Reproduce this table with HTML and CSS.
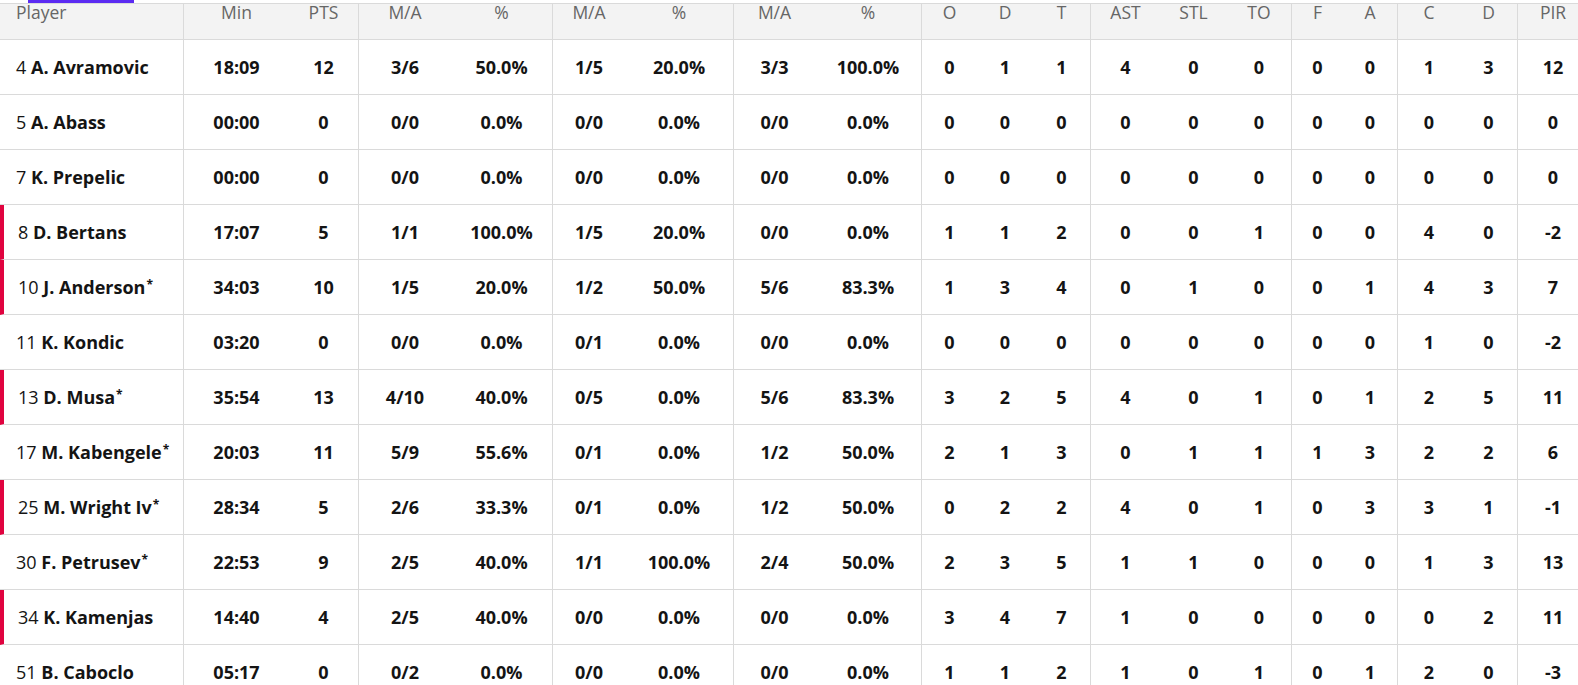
FILE: index.html
```html
<!DOCTYPE html>
<html lang="en">
<head>
<meta charset="utf-8">
<title>Box score</title>
<link rel="stylesheet" href="styles.css">
</head>
<body>
<div class="tabs"><span class="tab-indicator"></span></div>
<table class="box">
<colgroup>
<col class="c-player"><col class="c-min"><col class="c-pts">
<col class="c-ma1"><col class="c-pc1"><col class="c-ma2"><col class="c-pc2"><col class="c-ma3"><col class="c-pc3">
<col class="c-o"><col class="c-d"><col class="c-t">
<col class="c-ast"><col class="c-stl"><col class="c-to">
<col class="c-f"><col class="c-a">
<col class="c-c"><col class="c-d2">
<col class="c-pir">
</colgroup>
<thead>
<tr>
<th class="player">Player</th><th>Min</th><th class="g">PTS</th>
<th>M/A</th><th class="g">%</th><th>M/A</th><th class="g">%</th><th>M/A</th><th class="g">%</th>
<th>O</th><th>D</th><th class="g">T</th>
<th>AST</th><th>STL</th><th class="g">TO</th>
<th>F</th><th class="g">A</th>
<th>C</th><th class="g">D</th>
<th>PIR</th>
</tr>
</thead>
<tbody>
<tr><td class="player"><span class="num">4</span> <b>A. Avramovic</b></td><td>18:09</td><td class="g">12</td><td>3/6</td><td class="g">50.0%</td><td>1/5</td><td class="g">20.0%</td><td>3/3</td><td class="g">100.0%</td><td>0</td><td>1</td><td class="g">1</td><td>4</td><td>0</td><td class="g">0</td><td>0</td><td class="g">0</td><td>1</td><td class="g">3</td><td>12</td></tr>
<tr><td class="player"><span class="num">5</span> <b>A. Abass</b></td><td>00:00</td><td class="g">0</td><td>0/0</td><td class="g">0.0%</td><td>0/0</td><td class="g">0.0%</td><td>0/0</td><td class="g">0.0%</td><td>0</td><td>0</td><td class="g">0</td><td>0</td><td>0</td><td class="g">0</td><td>0</td><td class="g">0</td><td>0</td><td class="g">0</td><td>0</td></tr>
<tr><td class="player"><span class="num">7</span> <b>K. Prepelic</b></td><td>00:00</td><td class="g">0</td><td>0/0</td><td class="g">0.0%</td><td>0/0</td><td class="g">0.0%</td><td>0/0</td><td class="g">0.0%</td><td>0</td><td>0</td><td class="g">0</td><td>0</td><td>0</td><td class="g">0</td><td>0</td><td class="g">0</td><td>0</td><td class="g">0</td><td>0</td></tr>
<tr class="oncourt"><td class="player"><span class="num">8</span> <b>D. Bertans</b></td><td>17:07</td><td class="g">5</td><td>1/1</td><td class="g">100.0%</td><td>1/5</td><td class="g">20.0%</td><td>0/0</td><td class="g">0.0%</td><td>1</td><td>1</td><td class="g">2</td><td>0</td><td>0</td><td class="g">1</td><td>0</td><td class="g">0</td><td>4</td><td class="g">0</td><td>-2</td></tr>
<tr class="oncourt"><td class="player"><span class="num">10</span> <b>J. Anderson<sup>*</sup></b></td><td>34:03</td><td class="g">10</td><td>1/5</td><td class="g">20.0%</td><td>1/2</td><td class="g">50.0%</td><td>5/6</td><td class="g">83.3%</td><td>1</td><td>3</td><td class="g">4</td><td>0</td><td>1</td><td class="g">0</td><td>0</td><td class="g">1</td><td>4</td><td class="g">3</td><td>7</td></tr>
<tr><td class="player"><span class="num">11</span> <b>K. Kondic</b></td><td>03:20</td><td class="g">0</td><td>0/0</td><td class="g">0.0%</td><td>0/1</td><td class="g">0.0%</td><td>0/0</td><td class="g">0.0%</td><td>0</td><td>0</td><td class="g">0</td><td>0</td><td>0</td><td class="g">0</td><td>0</td><td class="g">0</td><td>1</td><td class="g">0</td><td>-2</td></tr>
<tr class="oncourt"><td class="player"><span class="num">13</span> <b>D. Musa<sup>*</sup></b></td><td>35:54</td><td class="g">13</td><td>4/10</td><td class="g">40.0%</td><td>0/5</td><td class="g">0.0%</td><td>5/6</td><td class="g">83.3%</td><td>3</td><td>2</td><td class="g">5</td><td>4</td><td>0</td><td class="g">1</td><td>0</td><td class="g">1</td><td>2</td><td class="g">5</td><td>11</td></tr>
<tr><td class="player"><span class="num">17</span> <b>M. Kabengele<sup>*</sup></b></td><td>20:03</td><td class="g">11</td><td>5/9</td><td class="g">55.6%</td><td>0/1</td><td class="g">0.0%</td><td>1/2</td><td class="g">50.0%</td><td>2</td><td>1</td><td class="g">3</td><td>0</td><td>1</td><td class="g">1</td><td>1</td><td class="g">3</td><td>2</td><td class="g">2</td><td>6</td></tr>
<tr class="oncourt"><td class="player"><span class="num">25</span> <b>M. Wright Iv<sup>*</sup></b></td><td>28:34</td><td class="g">5</td><td>2/6</td><td class="g">33.3%</td><td>0/1</td><td class="g">0.0%</td><td>1/2</td><td class="g">50.0%</td><td>0</td><td>2</td><td class="g">2</td><td>4</td><td>0</td><td class="g">1</td><td>0</td><td class="g">3</td><td>3</td><td class="g">1</td><td>-1</td></tr>
<tr><td class="player"><span class="num">30</span> <b>F. Petrusev<sup>*</sup></b></td><td>22:53</td><td class="g">9</td><td>2/5</td><td class="g">40.0%</td><td>1/1</td><td class="g">100.0%</td><td>2/4</td><td class="g">50.0%</td><td>2</td><td>3</td><td class="g">5</td><td>1</td><td>1</td><td class="g">0</td><td>0</td><td class="g">0</td><td>1</td><td class="g">3</td><td>13</td></tr>
<tr class="oncourt"><td class="player"><span class="num">34</span> <b>K. Kamenjas</b></td><td>14:40</td><td class="g">4</td><td>2/5</td><td class="g">40.0%</td><td>0/0</td><td class="g">0.0%</td><td>0/0</td><td class="g">0.0%</td><td>3</td><td>4</td><td class="g">7</td><td>1</td><td>0</td><td class="g">0</td><td>0</td><td class="g">0</td><td>0</td><td class="g">2</td><td>11</td></tr>
<tr><td class="player"><span class="num">51</span> <b>B. Caboclo</b></td><td>05:17</td><td class="g">0</td><td>0/2</td><td class="g">0.0%</td><td>0/0</td><td class="g">0.0%</td><td>0/0</td><td class="g">0.0%</td><td>1</td><td>1</td><td class="g">2</td><td>1</td><td>0</td><td class="g">1</td><td>0</td><td class="g">1</td><td>2</td><td class="g">0</td><td>-3</td></tr>
</tbody>
</table>
</body>
</html>
```
FILE: styles.css
```css
* { box-sizing: border-box; }
html, body { margin: 0; padding: 0; overflow: hidden; background: #fff; }
body { font-family: "Open Sans", "Liberation Sans", sans-serif; color: #141414; }

.tabs { height: 3px; display: flex; }
.tab-indicator { display: block; width: 106px; height: 3px; margin-left: 28px; background: #5b2bf2; }

.box {
  width: 1588px;
  table-layout: fixed;
  border-collapse: separate;
  border-spacing: 0;
  border-top: 1px solid #dadada;
}
.c-player { width: 184px; }
.c-min { width: 105px; }
.c-pts { width: 70px; }
.c-ma1 { width: 92px; }
.c-pc1 { width: 102px; }
.c-ma2 { width: 72px; }
.c-pc2 { width: 109px; }
.c-ma3 { width: 81px; }
.c-pc3 { width: 107px; }
.c-o { width: 55px; }
.c-d { width: 56px; }
.c-t { width: 58px; }
.c-ast { width: 69px; }
.c-stl { width: 67px; }
.c-to { width: 65px; }
.c-f { width: 51px; }
.c-a { width: 55px; }
.c-c { width: 62px; }
.c-d2 { width: 58px; }
.c-pir { width: 70px; }

.box th, .box td {
  padding: 0;
  text-align: center;
  border-bottom: 1px solid #dadada;
  white-space: nowrap;
}
.box th {
  height: 36px;
  vertical-align: top;
  background: #f3f3f3;
  color: #666;
  font-weight: 400;
  font-size: 17.5px;
  line-height: 16px;
}
.box td {
  height: 55px;
  vertical-align: middle;
  font-size: 18px;
  font-weight: 700;
  line-height: 20px;
}
.box .g { border-right: 1px solid #dadada; }
.box .player { text-align: left; padding-left: 16px; border-right: 1px solid #dadada; }
.box .num { font-weight: 400; }
.box b { font-weight: 700; }
.box sup { font-size: 12px; line-height: 0; vertical-align: 5px; margin-left: 1px; }
.box tr.oncourt .player { border-left: 4px solid #e0033f; padding-left: 14px; }
```
